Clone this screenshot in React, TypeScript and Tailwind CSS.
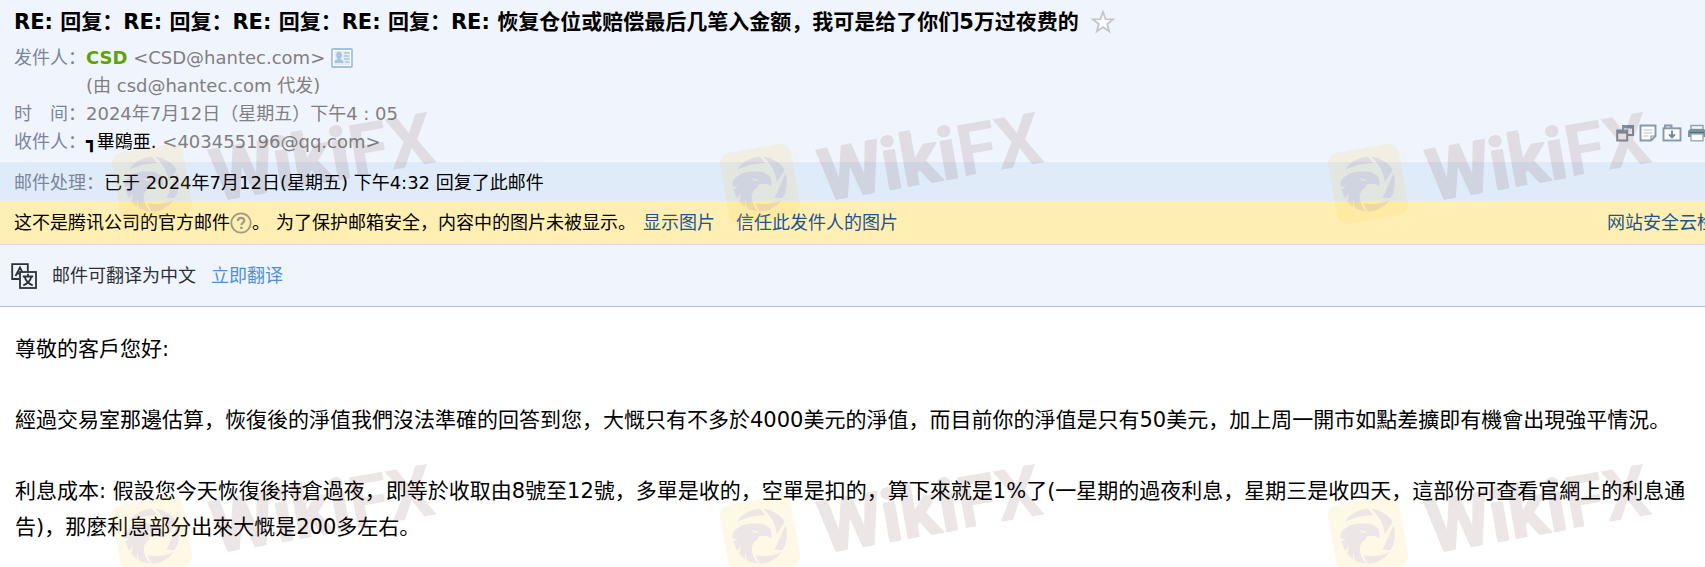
import React from "react";

const replyPrefix = "RE: 回复：".repeat(4);

const paragraphs = [
  "尊敬的客戶您好:",
  "經過交易室那邊估算，恢復後的淨值我們沒法準確的回答到您，大慨只有不多於4000美元的淨值，而目前你的淨值是只有50美元，加上周一開市如點差擴即有機會出現強平情況。",
  "利息成本: 假設您今天恢復後持倉過夜，即等於收取由8號至12號，多單是收的，空單是扣的，算下來就是1%了(一星期的過夜利息，星期三是收四天，這部份可查看官網上的利息通告)，那麼利息部分出來大慨是200多左右。",
];

function StarIcon() {
  return (
    <svg viewBox="0 0 24 24" className="h-6 w-6" aria-hidden="true">
      <path
        d="M12 2 14.6 9.1 22 9.4 16.2 14 18.2 21.4 12 17.2 5.8 21.4 7.8 14 2 9.4 9.4 9.1Z"
        fill="#fbfcfe"
        stroke="#c3c5c9"
        strokeWidth="1.8"
      />
    </svg>
  );
}

function ContactIcon() {
  return (
    <svg viewBox="0 0 22 20" className="h-5 w-[22px]" aria-hidden="true">
      <rect x="1" y="1" width="20" height="18" rx="1" fill="#fff" stroke="#a5c1db" strokeWidth="1.8" />
      <rect x="3" y="3" width="16" height="14" fill="#e6eff8" />
      <path d="M5.1 7.2a2.900 3.400 0 0 1 5.800 0c0 1.800-.7 2.700-1.400 3.200v.9c2 .4 3 1.400 3 3.700H3.500c0-2.300 1-3.300 3-3.700v-.9C5.800 9.900 5.100 9 5.100 7.200Z" fill="#a5c5e2" />
      <path d="M13 5h5.500M13 8h5.500M13 11h5.500M14 14h4.500" stroke="#a9c3dc" strokeWidth="1.300" />
    </svg>
  );
}

function HelpIcon() {
  return (
    <svg viewBox="0 0 22 22" className="h-[22px] w-[22px]" aria-hidden="true">
      <circle cx="11" cy="11" r="9.700" fill="none" stroke="#a19a82" strokeWidth="1.800" />
      <path d="M7.900 9c0-2 1.300-3.100 3.200-3.100s3.200 1.100 3.200 2.700c0 2.200-2.900 2.300-2.900 4.500" fill="none" stroke="#a19a82" strokeWidth="2.200" />
      <rect x="10.200" y="14.600" width="2.400" height="2.400" fill="#a19a82" />
    </svg>
  );
}

function TranslateIcon() {
  return (
    <svg viewBox="0 0 26 26" className="h-[26px] w-[26px]" fill="none" stroke="#2d3136" strokeWidth="1.800" aria-hidden="true">
      <path d="M8 16H1.200V1.200H16.800V8" />
      <path d="M4.500 13 9 4.500 11 8.300M6 10.500H8.500" />
      <rect x="9" y="9" width="16" height="16" />
      <path d="M17 10.800V13M11.800 13.500H22.200M20.300 13.800C19.300 18 16.500 20.800 12.300 22.300M13.700 13.800C14.700 18 17.500 20.800 21.700 22.300" />
    </svg>
  );
}

function WindowIcon() {
  return (
    <svg viewBox="0 0 18 18" className="h-[18px] w-[18px]" fill="#f0f4fc" stroke="#7d8f9f" strokeWidth="2" aria-hidden="true">
      <rect x="7" y="2" width="10" height="9" />
      <path d="M7 3.500H17" />
      <rect x="1.200" y="6.500" width="10" height="10" fill="#f6f6f9" />
      <path d="M1.200 8.200H11.200" strokeWidth="2.800" />
    </svg>
  );
}

function NoteIcon() {
  return (
    <svg viewBox="0 0 18 18" className="h-[18px] w-[18px]" fill="none" stroke="#8799a8" strokeWidth="1.900" aria-hidden="true">
      <path d="M1.500 1.500H16.500V12L12 16.500H1.500Z" fill="#fcfdfe" />
      <path d="M16.500 12H12V16.500" strokeWidth="1.200" />
      <path d="M4.500 6H13.500M4.500 9H13.500M4.500 12H9.500" stroke="#b9c4ce" strokeWidth="1.200" />
    </svg>
  );
}

function ArchiveIcon() {
  return (
    <svg viewBox="0 0 20 18" className="h-[18px] w-5" fill="none" stroke="#8799a8" strokeWidth="1.900" aria-hidden="true">
      <path d="M3 4V1.500H9.500V4" />
      <rect x="1.500" y="4.300" width="17" height="12.200" fill="#fafcfe" />
      <path d="M10 6.500V13M7 10.300 10 13.300 13 10.300" stroke="#71879a" />
    </svg>
  );
}

function PrinterIcon() {
  return (
    <svg viewBox="0 0 20 18" className="h-[18px] w-5" aria-hidden="true">
      <rect x="4" y="1.500" width="12" height="4" fill="#f0f4fc" stroke="#8f9fad" strokeWidth="1.400" />
      <path d="M3 5H17L19 7V13H1V7Z" fill="#7f92a2" />
      <path d="M3 8.700H17" stroke="#52687b" strokeWidth="1.500" />
      <rect x="4" y="10" width="12" height="6.800" fill="#fff" stroke="#9aa9b6" strokeWidth="1.400" />
    </svg>
  );
}

const tools = [
  { label: "新窗口打开", icon: <WindowIcon /> },
  { label: "添加备注", icon: <NoteIcon /> },
  { label: "归档", icon: <ArchiveIcon /> },
  { label: "打印", icon: <PrinterIcon /> },
];

// Tiled brand mark, drawn above the mail
function Watermark() {
  return (
    <svg className="pointer-events-none absolute inset-0 h-full w-full" aria-hidden="true">
      <defs>
        <pattern id="mark" x="92" y="80" width="608" height="352" patternUnits="userSpaceOnUse">
          <g opacity="0.12">
            <rect x="-36" y="-36" width="72" height="72" rx="10" fill="#f0c030" transform="translate(60 104) rotate(-10)" />
            <g transform="translate(60 104) scale(0.333)" fill="#612f2f">
              <path d="M-70-42C-53-68-30-80 0-82L16-62C-15-62-40-56-70-42Z" />
              <path d="M10-82C32-79 50-70 64-56L74-42 51-7C46-36 34-60 10-82Z" />
              <path d="M77-34C84-5 81 22 68 42L44 42Z" />
              <path d="M65 48C47 72 22 84-2 82L-14 58C15 64 40 59 65 48Z" />
              <path d="M-82-8C-72-25-50-36-22-38C8-40 30-30 33-14C35-6 36 2 34 8C28 2 16 1 4 5C-12 10-25 22-25 40C-24 57-17 70-7 82C-21 80-30 77-39 72L-45 45-45 70C-52 65-57 59-62 52L-58 28-68 44C-73 36-77 27-79 17L-66 4-81 10C-82 4-83-2-82-8Z" />
              <path d="M-25-17-4-12-1-18C-5-9-13-7-20-11Z" fill="#f0c030" />
              <path d="M-6 3C6-3 22-1 34 8L28 11C18 5 6 6-8 10Z" fill="#f0c030" />
            </g>
            <g transform="translate(124 121) rotate(-10)" fontFamily="Roboto" fontWeight="700" fontSize="72" fill="#612f2f">
              <text>
                <tspan stroke="#612f2f" strokeWidth="2" strokeLinejoin="round">
                  Wiki
                </tspan>
                <tspan>FX</tspan>
              </text>
            </g>
          </g>
        </pattern>
      </defs>
      <rect width="100%" height="100%" fill="url(#mark)" />
    </svg>
  );
}

export default function App() {
  return (
    <div className="relative min-h-screen overflow-hidden bg-white font-['DejaVu_Sans','Noto_Sans_CJK_SC',sans-serif] text-[18px] text-black">
      <header className="border-b border-[#a6c4dd] bg-[#f0f4fc]">
        <div className="flex h-11 items-center gap-3 px-3.5">
          <h1 className="pt-0.5 text-[21px] font-bold">{replyPrefix}RE: 恢复仓位或赔偿最后几笔入金额，我可是给了你们5万过夜费的</h1>
          <button type="button" aria-label="星标邮件">
            <StarIcon />
          </button>
        </div>

        <div className="flex items-end justify-between pl-3.5 leading-7">
          <dl className="grid auto-rows-[28px] grid-cols-[72px_1fr] text-[#808080]">
            <dt className="text-[#7b869c]">发件人：</dt>
            <dd className="flex items-center gap-1.5">
              <span>
                <b className="text-[#5fa207]">CSD</b> &lt;CSD@hantec.com&gt;
              </span>
              <button type="button" aria-label="联系人资料">
                <ContactIcon />
              </button>
            </dd>
            <dd className="col-start-2">(由 csd@hantec.com 代发)</dd>
            <dt className="text-[#7b869c]">时　间：</dt>
            <dd>2024年7月12日（星期五）下午4 : 05</dd>
            <dt className="text-[#7b869c]">收件人：</dt>
            <dd>
              <b className="text-black">┓</b>
              <span className="text-black">畢鴎亜.</span> &lt;403455196@qq.com&gt;
            </dd>
          </dl>
          <div className="mb-3.5 flex w-[89px] gap-[5px] overflow-hidden">
            {tools.map((tool) => (
              <button key={tool.label} type="button" aria-label={tool.label} className="shrink-0">
                {tool.icon}
              </button>
            ))}
          </div>
        </div>

        <div className="mt-1.5 flex h-[39px] items-center bg-[#dfebf9] px-3.5 pt-0.5">
          <span className="text-[#7b869c]">邮件处理：</span>
          <span>已于 2024年7月12日(星期五) 下午4:32 回复了此邮件</span>
        </div>

        <div className="flex h-[44px] items-center border-b border-[#d3dae6] bg-[#ffefb3] pl-3.5">
          <span>这不是腾讯公司的官方邮件</span>
          <button type="button" aria-label="帮助">
            <HelpIcon />
          </button>
          <span className="mr-1.5">。</span>
          <span className="mr-[7px]">为了保护邮箱安全，内容中的图片未被显示。</span>
          <a href="#images" className="mr-[21px] text-[#1e5494]">
            显示图片
          </a>
          <a href="#trust" className="text-[#1e5494]">
            信任此发件人的图片
          </a>
          <a href="#security" className="ml-auto w-[98px] overflow-hidden whitespace-nowrap text-[#1e5494]">
            网站安全云检
          </a>
        </div>

        <div className="flex h-[61px] items-center pl-[11px] text-[#2d3136]">
          <TranslateIcon />
          <span className="mx-[15px]">邮件可翻译为中文</span>
          <button type="button" className="text-[#4a90e2]">
            立即翻译
          </button>
        </div>
      </header>

      <main className="flex flex-col gap-[35px] py-6 pl-[15px] pr-2.5 text-[21px] leading-9">
        {paragraphs.map((text) => (
          <p key={text}>{text}</p>
        ))}
      </main>

      <Watermark />
    </div>
  );
}
